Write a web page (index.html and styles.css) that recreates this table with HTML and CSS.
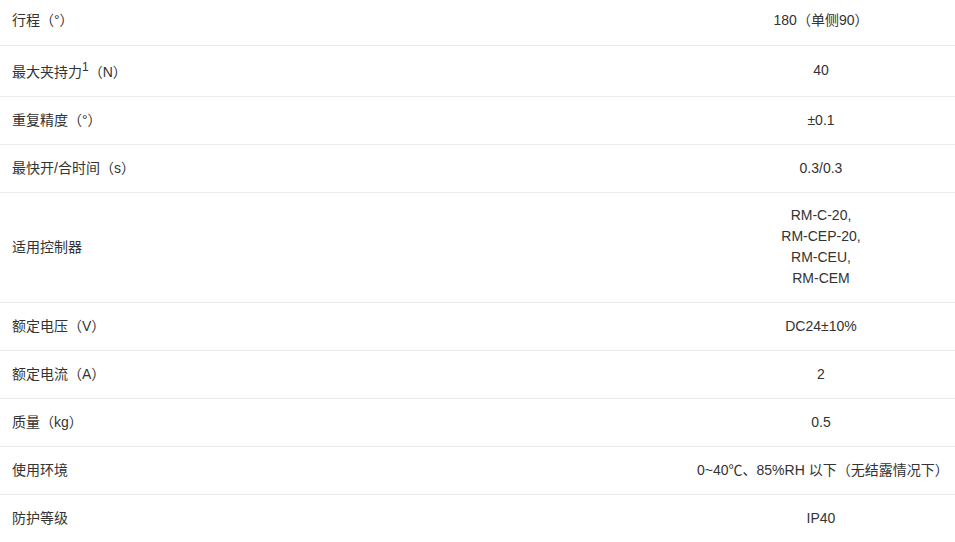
FILE: index.html
```html
<!DOCTYPE html>
<html lang="zh">
<head>
<meta charset="utf-8">
<link rel="stylesheet" href="styles.css">
</head>
<body>
<table class="spec">
  <tbody>
    <tr><td class="label">行程（°）</td><td class="value">180（单侧90）</td></tr>
    <tr><td class="label">最大夹持力<sup>1</sup>（N）</td><td class="value">40</td></tr>
    <tr><td class="label">重复精度（°）</td><td class="value">±0.1</td></tr>
    <tr><td class="label">最快开/合时间（s）</td><td class="value">0.3/0.3</td></tr>
    <tr><td class="label">适用控制器</td><td class="value">RM-C-20,<br>RM-CEP-20,<br>RM-CEU,<br>RM-CEM</td></tr>
    <tr><td class="label">额定电压（V）</td><td class="value">DC24±10%</td></tr>
    <tr><td class="label">额定电流（A）</td><td class="value">2</td></tr>
    <tr><td class="label">质量（kg）</td><td class="value">0.5</td></tr>
    <tr><td class="label">使用环境</td><td class="value">0~40℃、85%RH 以下（无结露情况下）</td></tr>
    <tr><td class="label">防护等级</td><td class="value">IP40</td></tr>
  </tbody>
</table>
</body>
</html>
```
FILE: styles.css
```css
html, body {
  margin: 0;
  padding: 0;
  background: #fff;
}
body {
  font-family: "Liberation Sans", "Noto Sans CJK SC", sans-serif;
  font-size: 14px;
  color: #333;
}
.spec {
  width: 955px;
  border-collapse: collapse;
  margin-top: -3px;
}
.spec tr {
  height: 48px;
}
.spec td {
  padding: 12.5px 10px;
  line-height: 21px;
  border-bottom: 1px solid #ebebeb;
  vertical-align: middle;
}
.spec .label {
  width: 665px;
  padding-left: 12px;
  text-align: left;
}
.spec .value {
  text-align: center;
}
.spec sup {
  font-size: 12px;
  line-height: 18px;
  vertical-align: 6px;
}
```
